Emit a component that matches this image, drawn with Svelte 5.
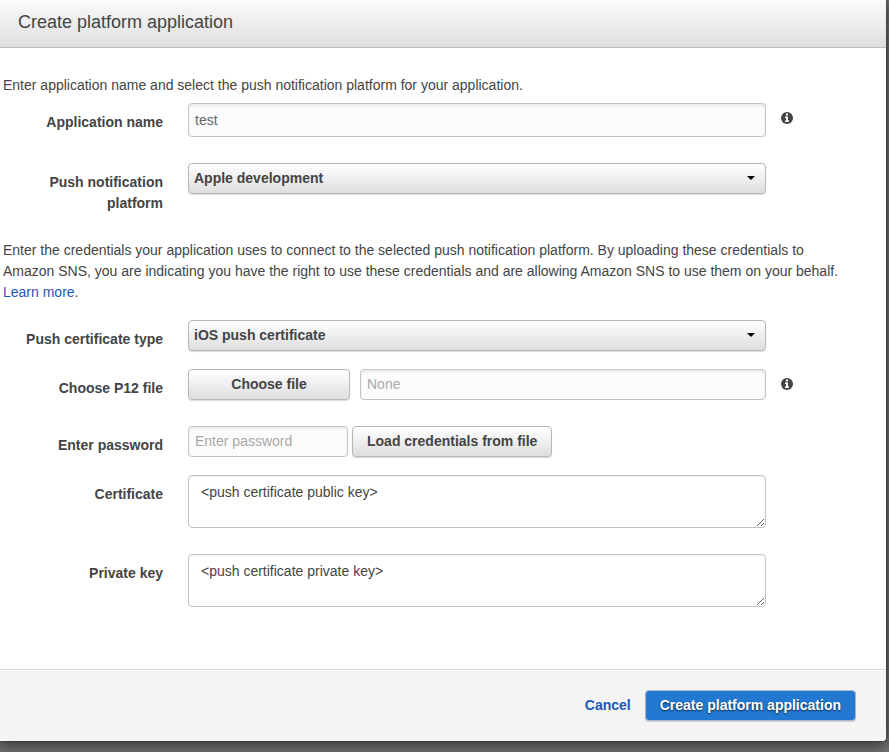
<script>
  let appName = $state('test');
  let platform = $state('Apple development');
  let certType = $state('iOS push certificate');
  let fileName = $state('');
  let password = $state('');
  let certificate = $state('<push certificate public key>');
  let privateKey = $state('<push certificate private key>');
</script>

{#snippet info()}
  <svg class="info" viewBox="0 0 12 12" role="img" aria-label="Information">
    <circle cx="6" cy="6" r="6" fill="#444" />
    <path d="M5 1.500h2v2H5zM4 4.500h3v4h1V10H4V8.500h1V6H4z" fill="#fff" />
  </svg>
{/snippet}

<div class="dialog" role="dialog" aria-labelledby="title">
  <header><h1 id="title">Create platform application</h1></header>

  <form id="platform-form" onsubmit={(e) => e.preventDefault()}>
    <p>Enter application name and select the push notification platform for your application.</p>

    <div class="row loose">
      <label for="name">Application name</label>
      <div class="field"><input id="name" class="tall" type="text" bind:value={appName} /></div>
      {@render info()}
    </div>
    <div class="row loose">
      <label for="platform">Push notification platform</label>
      <div class="field select">
        <select id="platform" bind:value={platform}>
          <option>Apple development</option>
          <option>Apple production</option>
        </select>
      </div>
    </div>

    <p class="credentials">
      Enter the credentials your application uses to connect to the selected push notification platform.
      By uploading these credentials to Amazon SNS, you are indicating you have the right to use these
      credentials and are allowing Amazon SNS to use them on your behalf.
      <a href="#learn">Learn more</a>.
    </p>

    <div class="row">
      <label for="cert-type">Push certificate type</label>
      <div class="field select">
        <select id="cert-type" bind:value={certType}>
          <option>iOS push certificate</option>
          <option>VoIP push certificate</option>
        </select>
      </div>
    </div>
    <div class="row loose">
      <label for="file">Choose P12 file</label>
      <div class="field file">
        <button type="button" class="choose">Choose file</button>
        <input id="file" type="text" placeholder="None" readonly bind:value={fileName} />
      </div>
      {@render info()}
    </div>
    <div class="row">
      <label for="password">Enter password</label>
      <div class="field password">
        <input id="password" type="password" placeholder="Enter password" bind:value={password} />
        <button type="button">Load credentials from file</button>
      </div>
    </div>
    <div class="row loose">
      <label for="certificate">Certificate</label>
      <div class="field"><textarea id="certificate" bind:value={certificate}></textarea></div>
    </div>
    <div class="row">
      <label for="private-key">Private key</label>
      <div class="field"><textarea id="private-key" bind:value={privateKey}></textarea></div>
    </div>
  </form>

  <footer>
    <a href="#cancel">Cancel</a>
    <button type="submit" form="platform-form" class="primary">Create platform application</button>
  </footer>
</div>

<style>
  :global(body) {
    background: #747474;
    min-height: 100vh;
  }
  .dialog,
  input,
  select,
  button,
  textarea {
    font-family: 'Liberation Sans', Arial, sans-serif;
    font-size: 14px;
    line-height: 21px;
    color: #444;
    box-sizing: border-box;
  }
  .dialog {
    margin-right: 3px;
    background: #fff;
    border-radius: 0 0 4px 0;
    box-shadow: 0 0 2px #222, 0 3px 16px 2px rgba(0, 0, 0, 0.55);
  }
  header {
    padding: 10px 18px 12px;
    background: linear-gradient(#fafafa, #dfdfdf);
    border-bottom: 1px solid #bfbfbf;
  }
  h1 {
    margin: 0;
    font-size: 18px;
    line-height: 25px;
    font-weight: 400;
  }
  form {
    padding: 27px 0 62px;
  }
  p {
    margin: 0 36px 7px 3px;
  }
  p.credentials {
    margin-bottom: 17px;
  }
  a {
    color: #1a5ab8;
    text-decoration: none;
  }
  .row {
    display: grid;
    grid-template-columns: 163px minmax(0, 1fr) 105px;
    column-gap: 15px;
    align-items: start;
    margin-bottom: 18px;
  }
  .row.loose {
    margin-bottom: 26px;
  }
  .row:last-child {
    margin-bottom: 0;
  }
  label {
    padding: 9px 0 0 24px;
    font-weight: 700;
    text-align: right;
  }
  .field {
    display: flex;
    position: relative;
    margin-left: 10px;
  }
  .file {
    gap: 10px;
  }
  .password {
    gap: 4px;
  }
  input,
  textarea {
    flex: 1;
    min-width: 0;
    margin: 0;
    border: 1px solid #c4c4c4;
    border-radius: 4px;
    outline: none;
  }
  input {
    height: 31px;
    padding: 0 6px 2px;
    background: #fcfcfc;
    color: #666;
    box-shadow: inset 0 2px 3px rgba(0, 0, 0, 0.08);
  }
  input.tall {
    height: 34px;
    padding-bottom: 0;
  }
  input::placeholder {
    color: #a9a9a9;
    opacity: 1;
  }
  .password input {
    flex: 0 0 160px;
  }
  textarea {
    height: 53px;
    padding: 6px 12px;
    background: #fff;
    box-shadow: inset 0 1px 1px rgba(0, 0, 0, 0.07);
    overflow: hidden;
    resize: both;
  }
  select,
  button {
    height: 31px;
    margin: 0;
    border: 1px solid #b7b7b7;
    border-radius: 4px;
    background: linear-gradient(#fff, #dedede);
    box-shadow: 0 1px 1px rgba(0, 0, 0, 0.15);
    font-weight: 700;
  }
  select {
    appearance: none;
    width: 100%;
    padding: 0 24px 0 5px;
  }
  .select::after {
    content: '';
    position: absolute;
    right: 11px;
    top: 13px;
    border: 4px solid transparent;
    border-top-color: #000;
    border-bottom: 0;
    pointer-events: none;
  }
  button {
    padding: 0 14px;
    white-space: nowrap;
  }
  .choose {
    flex: 0 0 162px;
  }
  .info {
    width: 12px;
    height: 12px;
    margin-top: 9px;
  }
  footer {
    display: flex;
    align-items: center;
    justify-content: flex-end;
    gap: 14px;
    padding: 20px 30px;
    background: #f4f4f4;
    border-top: 1px solid #d9d9d9;
    border-radius: 0 0 4px 0;
    box-shadow: inset 0 1px #fff;
  }
  footer a {
    font-weight: 700;
  }
  .primary {
    color: #fff;
    background: #2378d1;
    border-color: #a9b8c8;
    text-shadow: 0 1px 2px rgba(0, 0, 0, 0.7);
  }
</style>
